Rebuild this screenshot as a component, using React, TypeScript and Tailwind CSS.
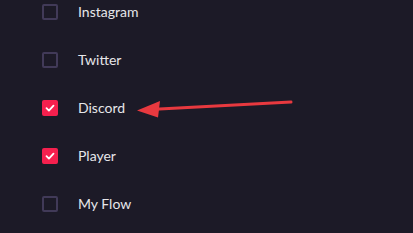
const items = [
  { label: 'Instagram', checked: false },
  { label: 'Twitter', checked: false },
  { label: 'Discord', checked: true },
  { label: 'Player', checked: true },
  { label: 'My Flow', checked: false },
];

export default function App() {
  return (
    <div className="relative w-[413px] h-[233px] overflow-hidden bg-[#1c1a27] font-['Lato',sans-serif]">
      <div className="flex flex-col gap-8 pl-[42px] pt-[4px]">
        {items.map((item) => (
          <div key={item.label} className="flex items-center h-4 gap-[20px]">
            {item.checked ? (
              <div className="w-4 h-4 rounded-[2px] bg-[#f5204e] flex items-center justify-center">
                <svg width="12" height="12" viewBox="0 0 12 12" fill="none">
                  <path d="M2.5 6.2l2.4 2.4 4.6-5" stroke="white" strokeWidth="1.8" strokeLinecap="round" strokeLinejoin="round" />
                </svg>
              </div>
            ) : (
              <div className="w-4 h-4 rounded-[2px] border-2 border-[#413a58]" />
            )}
            <span className="text-[14px] text-[#e6e6ea] leading-none">{item.label}</span>
          </div>
        ))}
      </div>

      {/* annotation arrow */}
      <svg className="absolute left-0 top-0" width="413" height="233" viewBox="0 0 413 233">
        <line x1="291" y1="102" x2="150" y2="109.5" stroke="#e8393f" strokeWidth="3" strokeLinecap="round" />
        <polygon points="137,110.5 160,101 158,117.5" fill="#e8393f" />
      </svg>
    </div>
  );
}
